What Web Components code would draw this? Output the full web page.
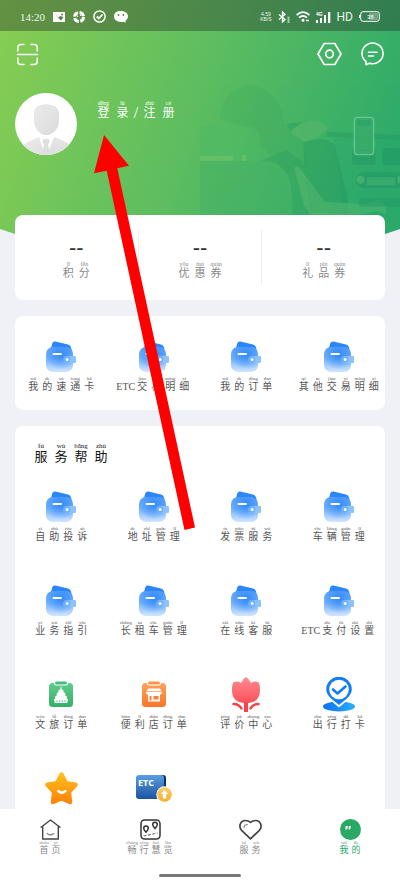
<!DOCTYPE html>
<html lang="zh-CN">
<head>
<meta charset="utf-8">
<meta name="viewport" content="width=device-width, initial-scale=1">
<title>我的</title>
<style>
  html, body { margin: 0; height: 100%; }
  body {
    font-family: "Liberation Serif", "Noto Sans CJK SC", serif;
    background: #fff;
    --page: #eff1f6;
    --green: #2aa866;
  }
</style>
</head>
<body>
<app-shell>
  <hero-panel slot="content">
    <status-bar slot="status"></status-bar>
  </hero-panel>
  <stats-card slot="content">
    <stat-cell t="积分" p="jī fēn"></stat-cell>
    <stat-cell t="优惠券" p="yōu huì quàn"></stat-cell>
    <stat-cell t="礼品券" p="lǐ pǐn quàn"></stat-cell>
  </stats-card>
  <menu-card slot="content">
    <menu-item icon="wallet" t="我的速通卡" p="wǒ de sù tōng kǎ"></menu-item>
    <menu-item icon="wallet" t="ETC交易明细" p="jiāo yì míng xì"></menu-item>
    <menu-item icon="wallet" t="我的订单" p="wǒ de dìng dān"></menu-item>
    <menu-item icon="wallet" t="其他交易明细" p="qí tā jiāo yì míng xì"></menu-item>
  </menu-card>
  <menu-card slot="content" class="last">
    <pinyin-text slot="title" size="title" t="服务帮助" p="fú wù bāng zhù"></pinyin-text>
    <menu-item icon="wallet" t="自助投诉" p="zì zhù tóu sù"></menu-item>
    <menu-item icon="wallet" t="地址管理" p="de zhǐ guǎn lǐ"></menu-item>
    <menu-item icon="wallet" t="发票服务" p="fā piào fú wù"></menu-item>
    <menu-item icon="wallet" t="车辆管理" p="chē liàng guǎn lǐ"></menu-item>
    <menu-item icon="wallet" t="业务指引" p="yè wù zhǐ yǐn"></menu-item>
    <menu-item icon="wallet" t="长租车管理" p="zhǎng zū chē guǎn lǐ"></menu-item>
    <menu-item icon="wallet" t="在线客服" p="zài xiàn kè fú"></menu-item>
    <menu-item icon="wallet" t="ETC支付设置" p="zhī fù shè zhì"></menu-item>
    <menu-item icon="travel" t="文旅订单" p="wén lǚ dìng dān"></menu-item>
    <menu-item icon="store" t="便利店订单" p="biàn lì diàn dìng dān"></menu-item>
    <menu-item icon="tulip" t="评价中心" p="píng jià zhōng xīn"></menu-item>
    <menu-item icon="pin" t="出行打卡" p="chū xíng dǎ kǎ"></menu-item>
    <menu-item icon="star"></menu-item>
    <menu-item icon="etc"></menu-item>
  </menu-card>
  <tab-bar slot="tabs">
    <tab-item icon="home" t="首页" p="shǒu yè"></tab-item>
    <tab-item icon="map" t="畅行慧览" p="chàng xíng huì lǎn"></tab-item>
    <tab-item icon="heart" t="服务" p="fú wù"></tab-item>
    <tab-item icon="me" t="我的" p="wǒ de" active></tab-item>
  </tab-bar>
  <guide-arrow slot="overlay"></guide-arrow>
</app-shell>

<script>
const define = (name, render) => customElements.define(name, class extends HTMLElement {
  connectedCallback() {
    if (this.shadowRoot) return;
    const tpl = document.createElement('template');
    tpl.innerHTML = render(this);
    this.attachShadow({ mode: 'open' }).appendChild(tpl.content.cloneNode(true));
  }
});

const ICONS = {
  wallet: `<svg width="30" height="31" viewBox="0 0 30 31">
    <defs>
      <linearGradient id="b" x1="0" y1="0" x2="0" y2="1"><stop offset="0" stop-color="#5fa6fb"/><stop offset=".45" stop-color="#76b3fc"/><stop offset="1" stop-color="#d0e5fe"/></linearGradient>
      <radialGradient id="g" cx=".55" cy=".3" r=".6"><stop offset="0" stop-color="#3389fa"/><stop offset="1" stop-color="#3389fa" stop-opacity="0"/></radialGradient>
    </defs>
    <path d="M4.500 9 6.200 2.400Q7 .2 9.400 .6L22 3.600Q24.500 4.300 25 6.400L26 11H4.500Z" fill="#2b85fb"/>
    <rect y="6" width="27" height="25" rx="7" fill="url(#b)"/>
    <rect y="6" width="27" height="25" rx="7" fill="url(#g)"/>
    <path d="M21 15h8q1 0 1 1v5q0 1-1 1h-8a3.500 3.500 0 0 1 0-7z" fill="#8cc3fc"/>
    <circle cx="21" cy="18.500" r="3.300" fill="#69affc"/><circle cx="21.200" cy="18.500" r="1.500" fill="#fff"/>
    <rect x="6.500" y="12" width="9.500" height="2" rx="1" fill="#fff"/></svg>`,
  travel: `<svg width="24" height="26" viewBox="0 0 24 26">
    <defs><linearGradient id="b" x1="0" y1="0" x2="0" y2="1"><stop offset="0" stop-color="#5fcc8b"/><stop offset="1" stop-color="#35b068"/></linearGradient></defs>
    <rect y="2" width="24" height="24" rx="3.500" fill="url(#b)"/><rect x="5" y="0" width="14" height="4.500" rx="2" fill="#fff"/><rect x="6" y="0.500" width="12" height="3" rx="1.500" fill="#49be79"/>
    <path d="M11.500 6h1v2l2 1.500v1.500l2 1.500-.5 1.500 2.200 2-.5 1.500 1.300 1v1.500h-.6V22H5.600v-2H5v-1.500l1.300-1-.5-1.500 2.200-2-.5-1.500 2-1.500V9.500l2-1.500z" fill="#fff"/>
    <path d="M8 19.500v1.500M10.700 19.500v1.500M13.300 19.500v1.500M16 19.500v1.500" stroke="#42b974" stroke-width="1"/></svg>`,
  store: `<svg width="24" height="26" viewBox="0 0 24 26">
    <defs><linearGradient id="b" x1="0" y1="0" x2="0" y2="1"><stop offset="0" stop-color="#ffa35e"/><stop offset="1" stop-color="#fb7527"/></linearGradient></defs>
    <rect y="2" width="24" height="24" rx="3.500" fill="url(#b)"/><rect x="5" y="0" width="14" height="4.500" rx="2" fill="#fff"/><rect x="6" y="0.500" width="12" height="3" rx="1.500" fill="#ff9448"/>
    <path d="M6 7.500h12l2 4.500q-.5 2-2 1.500v7H6v-7q-1.500.5-2-1.500z" fill="#fff"/>
    <path d="M5 10.500h14" stroke="#ff8d43" stroke-width=".7"/><path d="M7.500 15h2v4.500h-2zM11.500 15h5v3.500h-5z" fill="#fc8236"/></svg>`,
  tulip: `<svg width="28" height="35" viewBox="0 0 28 35">
    <defs><linearGradient id="b" x1="0" y1="0" x2="0" y2="1"><stop offset="0" stop-color="#ff8c92"/><stop offset="1" stop-color="#fd5058"/></linearGradient></defs>
    <path d="M14 0q3 1.500 5 6 3-2.500 7.500-.8Q28 7.500 28 13 28 26 14 26 0 26 0 13 0 7.500 1.500 5.200 6 3.500 9 6 11 1.500 14 0z" fill="url(#b)"/>
    <path d="M14 25v10" stroke="#fb414c" stroke-width="4"/>
    <path d="M1.500 27Q7 27 9.500 31.500M26.500 27Q21 27 18.500 31.500" fill="none" stroke="#fb414c" stroke-width="2.500" stroke-linecap="round"/></svg>`,
  pin: `<svg width="32" height="35" viewBox="0 0 32 35">
    <defs><linearGradient id="b" x1="0" y1="0" x2="1" y2="0"><stop offset="0" stop-color="#0b6ff5"/><stop offset="1" stop-color="#27b1fb"/></linearGradient></defs>
    <ellipse cx="16" cy="29.500" rx="16" ry="5" fill="url(#b)"/>
    <path d="M16 30.500C12 26.500 2 21 2 12.500a14 14 0 0 1 28 0C30 21 20 26.500 16 30.500z" fill="#fff"/>
    <path d="M16 28C12 24 3.200 19.500 3.200 12.500a12.800 12.800 0 0 1 25.600 0C28.800 19.500 20 24 16 28z" fill="#147cf3"/>
    <circle cx="16" cy="12.500" r="9.800" fill="#fff"/>
    <path d="M10 12.500l4.500 4 8-7" fill="none" stroke="#147cf3" stroke-width="2.600" stroke-linecap="round" stroke-linejoin="round"/></svg>`,
  star: `<svg width="33" height="33" viewBox="0 0 33 33">
    <defs><linearGradient id="b" gradientUnits="userSpaceOnUse" x1="0" y1="0" x2="0" y2="33"><stop offset="0" stop-color="#ffc21a"/><stop offset="1" stop-color="#ff7f0c"/></linearGradient></defs>
    <path d="M16.500 2.500 21 11.200 30.500 12.800 23.800 20 25 30 16.500 26.200 8 30 9.200 20 2.500 12.800 12 11.200z" fill="url(#b)" stroke="url(#b)" stroke-width="4.500" stroke-linejoin="round"/>
    <path d="M13.300 19q3.500 3.400 7 0" fill="none" stroke="#fff" stroke-width="2.500" stroke-linecap="round"/></svg>`,
  etc: `<svg width="36" height="28" viewBox="0 0 36 28">
    <defs><linearGradient id="b" x1="0" y1="0" x2="0" y2="1"><stop offset="0" stop-color="#5a9fe2"/><stop offset="1" stop-color="#1d529f"/></linearGradient>
    <linearGradient id="g" x1="0" y1="0" x2="0" y2="1"><stop offset="0" stop-color="#fdd267"/><stop offset="1" stop-color="#f6ab2c"/></linearGradient></defs>
    <rect x="3" y="1" width="27" height="23" rx="3" fill="#12305f"/><rect y="1" width="28" height="24" rx="3" fill="url(#b)"/>
    <text x="2" y="12" font-family="Open Sans, sans-serif" font-size="9" font-weight="700" fill="#fff">ETC</text>
    <circle cx="28.500" cy="20.500" r="8.200" fill="#fff"/><circle cx="28.500" cy="20.500" r="7.300" fill="url(#g)"/>
    <path d="M28.500 16l3.700 4h-2v4.500h-3.400V20h-2z" fill="#fff"/></svg>`,
  home: `<svg width="21" height="21" viewBox="0 0 21 21" fill="none" stroke="#444" stroke-width="1.400" stroke-linecap="round" stroke-linejoin="round"><path d="M1 8.200 10.500 1 20 8.200M2.700 7.200V20h15.600V7.200"/><path d="M7.200 14.500q3.300 3 6.600 0" stroke="#888"/></svg>`,
  map: `<svg width="21" height="21" viewBox="0 0 21 21" fill="none" stroke="#333" stroke-width="1.500"><rect x="1" y="1" width="19" height="19" rx="3.500"/><path d="M6 13.200C4.500 11.500 3.700 10.500 3.700 9.200a2.300 2.300 0 0 1 4.600 0C8.300 10.500 7.500 11.500 6 13.200zM15 9.500c-1.500-1.700-2.300-2.700-2.300-4a2.300 2.300 0 0 1 4.600 0c0 1.300-.8 2.300-2.300 4z"/><path d="M3.500 17l14-3" stroke="#777" stroke-width="1.200" stroke-dasharray="3 1.500"/></svg>`,
  heart: `<svg width="23" height="21" viewBox="0 0 23 21" fill="none" stroke="#444" stroke-width="1.700" stroke-linejoin="round" stroke-linecap="round"><path d="M11.500 19.800 2.600 11.300C-.8 7.500 1.300 1.500 6.400 1.500q3 0 5.100 1.800 2.100-1.800 5.100-1.800c5.100 0 7.200 6 3.800 9.800z"/><path d="M5 8.300Q5.200 5.700 8.300 5.500" stroke="#888" stroke-width="1.200"/></svg>`,
  me: `<svg width="21" height="21" viewBox="0 0 21 21"><circle cx="10.500" cy="10.500" r="10.500" fill="#2aa866"/><path d="M5.500 7h2.200v1.500l-.7 2H5.500zM8.700 7h2v1.500l-.7 2H8.700z" fill="#fff"/></svg>`
};

/* Characters with their pinyin reading set above each one. */
define('pinyin-text', el => {
  const readings = (el.getAttribute('p') || '').split(' ');
  const parts = (el.getAttribute('t') || '').match(/[\u4e00-\u9fff]|[^\u4e00-\u9fff]+/g) || [];
  const body = parts.map(s => /[\u4e00-\u9fff]/.test(s)
    ? `<ruby>${s}<rt>${readings.shift()}</rt></ruby>` : `<span>${s}</span>`).join('');
  return `<style>
    :host { display: inline-flex; align-items: flex-end; white-space: nowrap; --cell: 14px; --fs: 10px; --rt: 5px; --rth: 6px; --lh: 10px; }
    :host([size=name])  { --cell: 19px; --fs: 12px; --rt: 6px; --rth: 6px; --lh: 14px; }
    :host([size=stat])  { --cell: 16px; --fs: 11px; --rt: 6px; --rth: 6px; --lh: 12px; }
    :host([size=title]) { --cell: 20px; --fs: 13px; --rt: 7px; --rth: 8px; --lh: 14px; }
    :host([size=tab])   { --cell: 12px; --fs: 9px; --rt: 5px; --rth: 5px; --lh: 10px; }
    ruby { display: flex; flex-direction: column-reverse; align-items: center; width: var(--cell); font-size: var(--fs); line-height: var(--lh); }
    rt { display: block; font-size: var(--rt); line-height: var(--rth); }
    span { font-size: var(--fs); line-height: var(--lh); }
    :host([size=name]) span { width: 8px; text-align: center; font-size: 16px; }
  </style>${body}`;
});

define('app-shell', () => `<style>
    :host { display: flex; flex-direction: column; height: 100vh; position: relative; overflow: hidden; }
    main { flex: 1; min-height: 0; overflow: auto; scrollbar-width: none; background: var(--page); display: flex; flex-direction: column; }
    ::slotted(*) { flex: none; }
  </style><main><slot name="content"></slot></main><slot name="tabs"></slot><slot name="overlay"></slot>`);

define('status-bar', () => `<style>
    :host { display: flex; align-items: center; gap: 8px; height: 31px; padding: 2px 20px 0; box-sizing: border-box; background: rgba(40,40,40,.36); color: #eef4ea; }
    time { font-size: 11px; }
    .right { margin-left: auto; display: flex; align-items: center; gap: 6px; }
    .rate { font: 5px/5px "Liberation Sans", sans-serif; text-align: center; }
    .hd { font: 12px/14px Roboto, sans-serif; }
    svg { display: block; }
  </style>
  <time>14:20</time>
  <svg width="12" height="10" viewBox="0 0 12 10"><path d="M0 0h12v10H0z" fill="#fff"/><path d="M1.500 2l4 3.500L7 4l3.500 1L8 8.500z" fill="#528345"/><circle cx="9" cy="2.600" r="1" fill="#528345"/></svg>
  <svg width="12" height="12" viewBox="0 0 12 12"><circle cx="6" cy="6" r="4.500" fill="none" stroke="#fff" stroke-width="3" stroke-dasharray="5.500 1.570"/><path d="M3 3l2 3M9 3L7 5" stroke="#fff"/></svg>
  <svg width="13" height="13" viewBox="0 0 13 13" fill="none" stroke="#fff" stroke-width="1.500"><circle cx="6.500" cy="6.500" r="5.600"/><path d="M3.800 6.500l2 2L9.500 4.500" stroke-width="1.800"/></svg>
  <svg width="14" height="12" viewBox="0 0 14 12"><path d="M7 0c4 0 7 2.300 7 5.300 0 2-1 3.500-2.500 4.400l.3 2.100-2.300-1.100Q8.300 11 7 11 0 10.500 0 5.300 0 0 7 0z" fill="#fff"/><circle cx="4.500" cy="4" r=".9" fill="#528345"/><circle cx="9.300" cy="4" r=".9" fill="#528345"/></svg>
  <div class="right">
    <div class="rate">4.59<br>KB/S</div>
    <svg width="12" height="12" viewBox="0 0 12 12" fill="none" stroke="#fff" stroke-width="1.300"><path d="M1 3.500l6 5L4.500 11V1L7 3.500l-6 5"/><path d="M10.500 5.500V12" stroke-width="2" opacity=".55"/></svg>
    <svg width="14" height="11" viewBox="0 0 14 11" fill="none" stroke="#fff" stroke-width="1.700"><path d="M.6 4Q7-1.700 13.400 4M3 6.700q4-3.400 8 0"/><circle cx="7" cy="9.300" r=".7"/><path d="M10 9.500h3" stroke-width="1.500"/></svg>
    <svg width="15" height="12" viewBox="0 0 15 12"><path d="M0 9h2v3H0zM4 7h2v5H4zM8 4h2v8H8zM12 1h2.300v11H12z" fill="#fff"/><text x="0" y="4.500" font-family="Liberation Sans, sans-serif" font-size="5" font-weight="700" fill="#fff">4G</text></svg>
    <span class="hd">HD</span>
    <svg width="21" height="11" viewBox="0 0 21 11"><path d="M4 .7h14a2.300 2.300 0 0 1 2.300 2.300v5a2.300 2.300 0 0 1-2.300 2.300H4A2.300 2.300 0 0 1 1.700 8V3A2.300 2.300 0 0 1 4 .7zM.5 4v3" fill="none" stroke="#fff"/><rect x="10" y="2" width="9" height="7" rx="1" fill="#fff" opacity=".3"/><text x="8" y="7.500" font-family="Liberation Sans, sans-serif" font-size="6" fill="#fff">38</text></svg>
  </div>`);

define('hero-panel', () => `<style>
    :host { display: block; position: relative; color: #fff; padding-bottom: 85px;
      background: linear-gradient(109deg, #88ce52 0%, #5dbd60 48%, #2fab6a 92%);
      clip-path: polygon(0 0, 100% 0, 100% calc(100% - 11px), calc(100% - 33px) 100%, 33px 100%, 0 calc(100% - 11px)); }
    .scene { position: absolute; right: 0; bottom: 0; opacity: .65; }
    .front { position: relative; }
    .tools { display: flex; align-items: center; gap: 18px; padding: 11px 16px 0; }
    button { border: 0; background: none; padding: 0; color: inherit; font: inherit; display: flex; cursor: pointer; }
    .scan { margin-right: auto; }
    .profile { display: flex; align-items: flex-start; gap: 17px; padding: 27px 15px 0; }
    .login { padding-top: 7px; }
    svg { display: block; }
  </style>
  <svg class="scene" width="200" height="160" viewBox="0 0 600 480" aria-hidden="true">
    <path d="M60 120Q60 30 150 15 240 30 255 135l30 20q40 50 35 105l-60 20-90-100-30-40z" fill="#37a35c" opacity=".3"/>
    <path d="M380 155l220 10v14l-220-8z" fill="#16885f" opacity=".4"/>
    <path d="M400 175h200v305H440z" fill="#1aa074" opacity=".28"/>
    <path d="M0 138h150q30 5 30 35v30q0 38-40 38H0z" fill="#4fba66" opacity=".6"/>
    <path d="M0 228h100v14H0zM126 225h12v18h-12z" fill="#8ccb70" opacity=".5"/>
    <path d="M0 243h170q70 0 90 70 12 60 12 167H0z" fill="#41ae68" opacity=".55"/>
    <path d="M180 243q70 0 90 60 10 50 8 177h80L310 250l-50-40z" fill="#188c5c" opacity=".32"/>
    <path d="M310 185q70-20 95 10 20 90 38 150v60l-110-10-20-130z" fill="#168a5c" opacity=".42"/>
    <path d="M258 135q30-10 50-8l-35 24z" fill="#168a5c" opacity=".4"/>
    <path d="M272 158q40-40 80-36 25 8 30 26-20 10-30 26l-38 12z" fill="#62b96b" opacity=".65"/>
    <path d="M282 262l14-2 78 105 120 8 40-12q28 5 24 40l-26-8-60 12H330l-18-30z" fill="#5fbb72" opacity=".6"/>
    <rect x="456" y="205" width="70" height="50" rx="8" fill="#1b8a60" opacity=".5"/>
    <rect x="463" y="112" width="58" height="112" rx="9" fill="#3bad72" stroke="#7fd3a4" stroke-width="4"/>
    <rect x="472" y="120" width="40" height="92" rx="4" fill="#249a67" opacity=".7"/><path d="M474 138h38v72h-38z" fill="#46ad6b" opacity=".7"/>
    <rect x="546" y="204" width="70" height="52" rx="12" fill="#168a62" opacity=".5"/>
    <rect x="468" y="276" width="150" height="48" rx="24" fill="#168a62" opacity=".45"/>
    <circle cx="482" cy="299" r="12" fill="#63ba7b" opacity=".7"/><circle cx="604" cy="299" r="12" fill="#63ba7b" opacity=".7"/>
    <rect x="498" y="290" width="90" height="28" rx="3" fill="#44ac72" stroke="#168a62" stroke-width="2" opacity=".8"/>
    <rect x="476" y="354" width="140" height="26" rx="10" fill="#168a62" opacity=".4"/>
  </svg>
  <slot name="status"></slot>
  <div class="front">
    <div class="tools">
      <button class="scan" aria-label="扫一扫"><svg width="23" height="23" viewBox="0 0 23 23" fill="none" stroke="#fff" stroke-width="1.500" stroke-linecap="round"><path d="M1.800 8V4.500Q1.800 1.500 4.800 1.500H8M15 1.500h3.200q3 0 3 3V8M1.800 15v3.500q0 3 3 3H8M15 21.500h3.200q3 0 3-3V15M1.500 11.500h20"/></svg></button>
      <button aria-label="设置"><svg width="25" height="24" viewBox="0 0 25 24" fill="none" stroke="#fff" stroke-width="1.700" stroke-linejoin="round"><path d="M7.200 1.500h10.600L24 12l-6.200 10.500H7.200L1 12z"/><circle cx="12.500" cy="12" r="3.800"/></svg></button>
      <button aria-label="消息"><svg width="24" height="24" viewBox="0 0 24 24" fill="none" stroke="#fff" stroke-width="1.600" stroke-linejoin="round" stroke-linecap="round"><path d="M6 19.500V22.800L9.500 21.300A10.500 10.300 0 1 0 6 19.500z"/><path d="M8.500 10.300h8.500M8.500 14h5"/></svg></button>
    </div>
    <div class="profile">
      <svg width="62" height="62" viewBox="0 0 62 62" role="img" aria-label="头像">
        <defs><clipPath id="c"><circle cx="31" cy="31" r="31"/></clipPath><linearGradient id="h" x1="0" y1="0" x2="1" y2="1"><stop offset="0" stop-color="#ececec"/><stop offset="1" stop-color="#dadada"/></linearGradient></defs>
        <circle cx="31" cy="31" r="31" fill="#fff"/>
        <path d="M19 21q-1-9 12-10 13 1 13 10v9q-2 9-10 12h-5q-8-3-10-12z" fill="url(#h)"/>
        <g clip-path="url(#c)"><path d="M8 52q6-4 16-8l6 18h2l7-18q10 3 16 8l5 12H3z" fill="url(#h)"/><path d="M28.500 46h5l1 3-1.500 3 2 8-4 3-4-3 2-8-1.500-3z" fill="#dedede"/></g>
      </svg>
      <button class="login"><pinyin-text size="name" t="登录/注册" p="dēng lù zhù cè"></pinyin-text></button>
    </div>
  </div>`);

define('stats-card', () => `<style>
    :host { display: flex; margin: -25px 15px 0; background: #fff; border-radius: 8px; position: relative; }
    ::slotted(*) { flex: 1; margin: 15px 0; }
    ::slotted(:not(:first-child)) { border-left: 1px solid #eee; }
  </style><slot></slot>`);

define('stat-cell', el => `<style>
    :host { display: flex; flex-direction: column; align-items: center; gap: 3px; padding: 8px 0 6px; color: #888; box-sizing: border-box; }
    b { font: 22px/20px "Liberation Sans", sans-serif; color: #333; }
  </style><b>--</b><pinyin-text size="stat" t="${el.getAttribute('t')}" p="${el.getAttribute('p')}"></pinyin-text>`);

define('menu-card', () => `<style>
    :host { display: block; margin: 16px 15px 0; background: #fff; border-radius: 8px; padding: 24px 0 18px; }
    :host(.last) { padding-top: 16px; }
    h2 { margin: 0 0 26px; padding-left: 16px; color: #111; font-size: 14px; font-weight: 400; display: flex; }
    :host(:not(.last)) h2 { display: none; }
    .grid { display: grid; grid-template-columns: repeat(4, minmax(0, 1fr)); row-gap: 42px; }
  </style><h2><slot name="title"></slot></h2><div class="grid"><slot></slot></div>`);

define('menu-item', el => `<style>
    :host { display: block; }
    button { width: 100%; border: 0; background: none; padding: 0; color: #555; font: inherit; display: flex; flex-direction: column; align-items: center; gap: 4px; cursor: pointer; }
    .icon { display: flex; align-items: center; justify-content: center; height: 32px; }
    svg { display: block; flex: none; }
    pinyin-text { height: 16px; }
  </style><button><span class="icon">${ICONS[el.getAttribute('icon')]}</span>
  <pinyin-text t="${el.getAttribute('t') || ''}" p="${el.getAttribute('p') || ''}"></pinyin-text></button>`);

define('tab-bar', () => `<style>
    :host { display: block; background: #fff; padding: 10px 0 11px; }
    nav { display: grid; grid-template-columns: repeat(4, 1fr); }
    .bar { width: 82px; height: 3px; border-radius: 2px; background: #777; margin: 19px auto 0; }
  </style><nav><slot></slot></nav><div class="bar"></div>`);

define('tab-item', el => `<style>
    :host { display: block; color: #888; }
    :host([active]) { color: var(--green); }
    a { color: inherit; text-decoration: none; display: flex; flex-direction: column; align-items: center; }
    svg { display: block; }
  </style><a href="#${el.getAttribute('icon')}">${ICONS[el.getAttribute('icon')]}<pinyin-text size="tab" t="${el.getAttribute('t')}" p="${el.getAttribute('p')}"></pinyin-text></a>`);

/* Red pointer laid over the page, aimed at the login link. */
define('guide-arrow', () => `<style>
    :host { position: absolute; left: 94px; top: 135px; pointer-events: none; }
    svg { display: block; }
  </style><svg width="101" height="395" viewBox="94 135 101 395" aria-hidden="true"><path d="M104 135 129 165.700 117.300 168.300 195 527.500 184.500 530 106.700 170.700 94 173.300z" fill="#fe0000"/></svg>`);
</script>
</body>
</html>
